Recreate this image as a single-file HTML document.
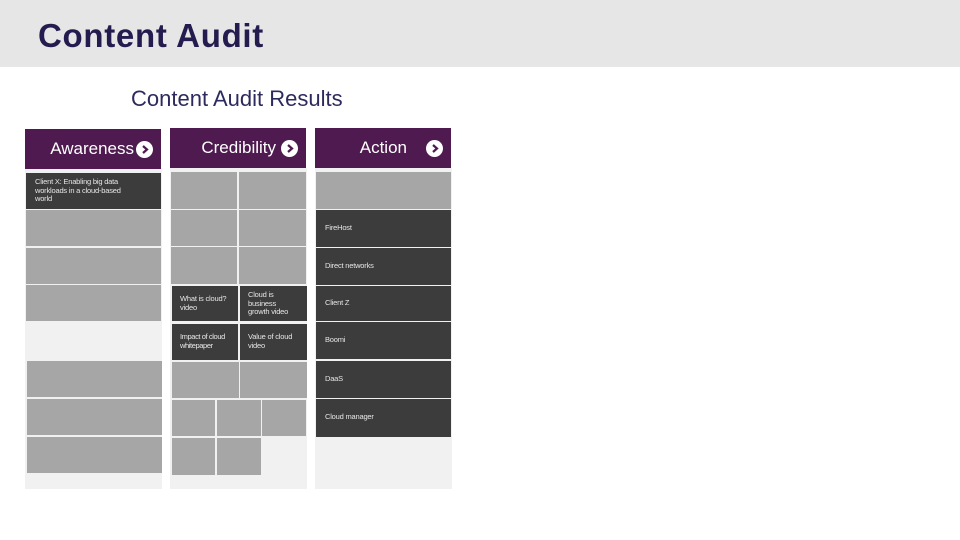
<!DOCTYPE html>
<html><head><meta charset="utf-8"><style>
*{margin:0;padding:0;box-sizing:border-box}
body{width:960px;height:540px;background:#fff;position:relative;overflow:hidden;font-family:"Liberation Sans",sans-serif}
.a{position:absolute}
.top{left:0;top:0;width:960px;height:67px;background:#e6e6e6}
.t{left:38px;top:17px;font-size:33px;font-weight:bold;color:#241c4f;letter-spacing:0.7px}
.st{left:131px;top:86px;font-size:22px;color:#2d2a5e}
.col{background:#f1f1f1}
.h{background:#4e1a4f;color:#fff;font-size:17px;height:40px;line-height:40px}
.ic{position:absolute;width:17px;height:17px;border-radius:50%;background:#fff;top:12px}
.ic svg{position:absolute;left:0;top:0}
.g{background:#a6a6a6}
.d{background:#3c3c3c;color:#e6e6e6;font-size:7.5px;line-height:8.5px;letter-spacing:-0.2px}
</style></head><body>
<div class="a top"></div>
<div class="a t">Content Audit</div>
<div class="a st">Content Audit Results</div>

<div class="a col" style="left:25px;top:168px;width:137px;height:321px"></div>
<div class="a col" style="left:170px;top:168px;width:137px;height:321px"></div>
<div class="a col" style="left:315px;top:168px;width:137px;height:321px"></div>

<div class="a h" style="left:25px;top:129px;width:136px"><span style="position:absolute;right:27px">Awareness</span><div class="ic" style="right:8px"><svg width="17" height="17"><path d="M7 5l4 3.5-4 3.5" stroke="#4e1a4f" stroke-width="2.2" fill="none"/></svg></div></div>
<div class="a h" style="left:170px;top:128px;width:136px"><span style="position:absolute;right:30px">Credibility</span><div class="ic" style="right:8px"><svg width="17" height="17"><path d="M7 5l4 3.5-4 3.5" stroke="#4e1a4f" stroke-width="2.2" fill="none"/></svg></div></div>
<div class="a h" style="left:315px;top:128px;width:136px"><span style="position:absolute;right:44px">Action</span><div class="ic" style="right:8px"><svg width="17" height="17"><path d="M7 5l4 3.5-4 3.5" stroke="#4e1a4f" stroke-width="2.2" fill="none"/></svg></div></div>

<!-- Awareness -->
<div class="a d" style="left:26px;top:173px;width:135px;height:36px;padding:5px 30px 0 9px">Client X: Enabling big data workloads in a cloud-based world</div>
<div class="a g" style="left:26px;top:210px;width:135px;height:36px"></div>
<div class="a g" style="left:26px;top:248px;width:135px;height:36px"></div>
<div class="a g" style="left:26px;top:285px;width:135px;height:36px"></div>
<div class="a g" style="left:27px;top:361px;width:135px;height:36px"></div>
<div class="a g" style="left:27px;top:399px;width:135px;height:36px"></div>
<div class="a g" style="left:27px;top:437px;width:135px;height:36px"></div>

<!-- Credibility -->
<div class="a g" style="left:171px;top:172px;width:66px;height:37px"></div>
<div class="a g" style="left:239px;top:172px;width:67px;height:37px"></div>
<div class="a g" style="left:171px;top:210px;width:66px;height:36px"></div>
<div class="a g" style="left:239px;top:210px;width:67px;height:36px"></div>
<div class="a g" style="left:171px;top:247px;width:66px;height:37px"></div>
<div class="a g" style="left:239px;top:247px;width:67px;height:37px"></div>
<div class="a d" style="left:172px;top:286px;width:66px;height:35px;padding:9px 4px 0 8px">What is cloud? video</div>
<div class="a d" style="left:240px;top:286px;width:67px;height:35px;padding:5px 14px 0 8px">Cloud is business growth video</div>
<div class="a d" style="left:172px;top:324px;width:66px;height:36px;padding:9px 2px 0 8px;letter-spacing:-0.4px">Impact of cloud whitepaper</div>
<div class="a d" style="left:240px;top:324px;width:67px;height:36px;padding:9px 4px 0 8px">Value of cloud video</div>
<div class="a g" style="left:172px;top:362px;width:67px;height:36px"></div>
<div class="a g" style="left:240px;top:362px;width:67px;height:36px"></div>
<div class="a g" style="left:172px;top:400px;width:43px;height:36px"></div>
<div class="a g" style="left:217px;top:400px;width:44px;height:36px"></div>
<div class="a g" style="left:262px;top:400px;width:44px;height:36px"></div>
<div class="a g" style="left:172px;top:438px;width:43px;height:37px"></div>
<div class="a g" style="left:217px;top:438px;width:44px;height:37px"></div>

<!-- Action -->
<div class="a g" style="left:316px;top:172px;width:135px;height:37px"></div>
<div class="a d" style="left:316px;top:210px;width:135px;height:37px;padding:14px 9px">FireHost</div>
<div class="a d" style="left:316px;top:248px;width:135px;height:37px;padding:14px 9px">Direct networks</div>
<div class="a d" style="left:316px;top:286px;width:135px;height:35px;padding:13px 9px">Client Z</div>
<div class="a d" style="left:316px;top:322px;width:135px;height:37px;padding:14px 9px">Boomi</div>
<div class="a d" style="left:316px;top:361px;width:135px;height:37px;padding:14px 9px">DaaS</div>
<div class="a d" style="left:316px;top:399px;width:135px;height:38px;padding:14px 9px">Cloud manager</div>
</body></html>
